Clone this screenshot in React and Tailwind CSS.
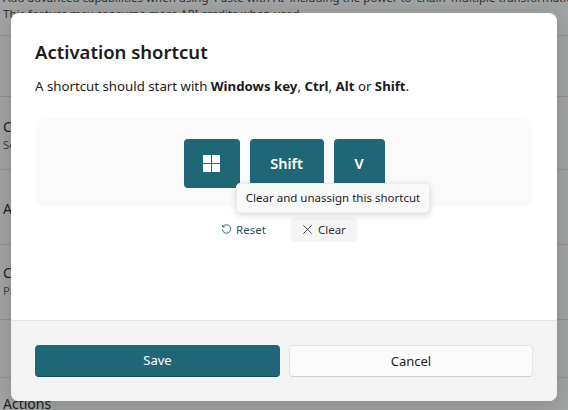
const font = { fontFamily: '"Noto Sans", "Open Sans", sans-serif' };

function WinIcon() {
  return (
    <svg width="17" height="17" viewBox="0 0 17 17" fill="#ffffff">
      <rect x="0" y="0" width="8" height="8" />
      <rect x="9" y="0" width="8" height="8" />
      <rect x="0" y="9" width="8" height="8" />
      <rect x="9" y="9" width="8" height="8" />
    </svg>
  );
}

function Key({ className, children }) {
  return (
    <div className={`h-[49px] rounded-[4px] bg-[#1f6777] text-white flex items-center justify-center text-[14.5px] font-semibold ${className}`}>
      {children}
    </div>
  );
}

function BgRow({ h, title, sub, pt = '' }) {
  return (
    <div className={`flex flex-col justify-center pl-[3px] border-b border-[#939393] ${h} ${pt}`}>
      {title && <span className="text-[14px] leading-[18px] text-[#222]">{title}</span>}
      {sub && <span className="text-[11.5px] leading-[18px] text-[#444]">{sub}</span>}
    </div>
  );
}

export default function App() {
  return (
    <div style={font} className="relative w-[568px] h-[410px] overflow-hidden bg-[#a3a4a4]">
      <div className="flex flex-col -mt-[9px]">
        <div className="pl-[3px] h-[45px] border-b border-[#939393] text-[11.5px] leading-[15px] text-[#333] whitespace-nowrap">
          <div className="-mt-[1px]">Add advanced capabilities when using 'Paste with AI' including the power to 'chain' multiple transformations</div>
          <div className="mt-[1px]">This feature may consume more API credits when used.</div>
        </div>
        <BgRow h="h-[61px]" />
        <BgRow h="h-[73px]" pt="pt-[5px]" title="Custom" sub="Set" />
        <BgRow h="h-[75px]" pt="pt-[3px]" title="Actions" />
        <BgRow h="h-[75px]" title="Custom" sub="Paste" />
        <BgRow h="h-[58px]" />
        <div className="h-[40px] pt-[17px] pl-[3px] text-[14px] leading-[18px] text-[#222]">Actions</div>
      </div>

      <div className="absolute left-[11px] top-[13px] w-[546px] h-[388px] rounded-[8px] bg-white overflow-hidden flex flex-col shadow-[0_4px_24px_rgba(0,0,0,0.18)]">
        <div className="h-[308px] px-[24px] pt-[26px] flex flex-col border-b border-[#e5e5e5]">
          <h1 className="text-[18.5px] leading-[26px] font-semibold text-[#1b1b1b]">Activation shortcut</h1>
          <p className="mt-[11px] text-[13.25px] leading-[20px] text-[#1b1b1b]">
            A shortcut should start with <b className="font-bold">Windows key</b>, <b className="font-bold">Ctrl</b>, <b className="font-bold">Alt</b> or <b className="font-bold">Shift</b>.
          </p>
          <div className="mt-[23px] ml-[1px] w-[496px] h-[88px] rounded-[8px] bg-[#fafafa] flex justify-center pt-[20px] gap-[10px]">
            <Key className="w-[56px]"><WinIcon /></Key>
            <Key className="w-[74px]">Shift</Key>
            <Key className="w-[51px]">V</Key>
          </div>
          <div className="mt-[10px] ml-[10px] flex justify-center items-center gap-[25px] text-[11.5px]">
            <div className="flex items-center gap-[4px] h-[25px] text-[#1f4f5b]">
              <svg width="11" height="11" viewBox="0 0 12 12" fill="none" stroke="#1f5f6f" strokeWidth="1">
                <path d="M2.2 2.8A4.6 4.6 0 1 1 1.4 6" />
                <path d="M1.8 0.8V3.2H4.2" />
              </svg>
              <span>Reset</span>
            </div>
            <div className="flex items-center gap-[5px] h-[25px] w-[66px] justify-center rounded-[4px] bg-[#f5f5f5] text-[#333]">
              <svg width="11" height="11" viewBox="0 0 12 12" fill="none" stroke="#333" strokeWidth="1">
                <path d="M1.5 1.5L10.5 10.5M10.5 1.5L1.5 10.5" />
              </svg>
              <span>Clear</span>
            </div>
          </div>
        </div>
        <div className="flex-1 bg-[#f3f3f3] px-[24px] pt-[24px] flex gap-[9px] items-start">
          <button className="w-[245px] h-[32px] pt-[1px] rounded-[4px] bg-[#1f6777] text-white text-[13px] border-b border-[#174f5c]">Save</button>
          <button className="w-[244px] h-[32px] pt-[1px] rounded-[4px] bg-[#fbfbfb] text-[#1b1b1b] text-[13px] border border-[#e6e6e6] border-b-[#cfcfcf]">Cancel</button>
        </div>
      </div>

      <div className="absolute left-[236px] top-[183px] w-[194px] h-[30px] rounded-[4px] bg-[#f9f9f9] border border-[#ececec] shadow-[0_2px_6px_rgba(0,0,0,0.16)] flex items-center justify-center text-[11.5px] text-[#1b1b1b] whitespace-nowrap">
        Clear and unassign this shortcut
      </div>
    </div>
  );
}
